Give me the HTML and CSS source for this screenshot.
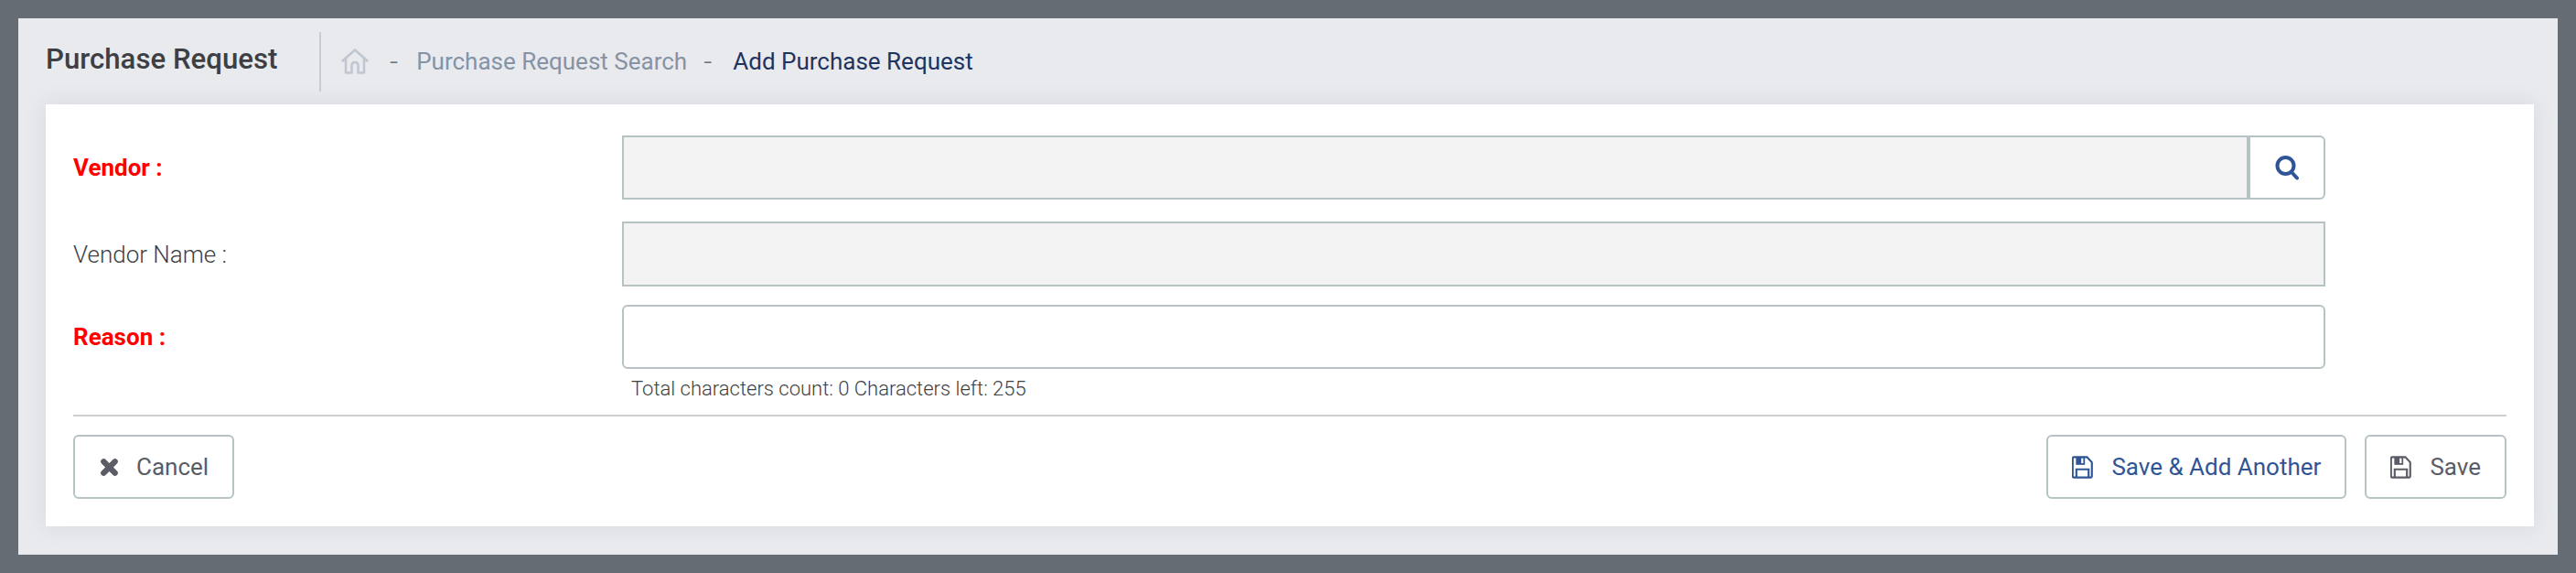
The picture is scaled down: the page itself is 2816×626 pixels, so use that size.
FILE: index.html
```html
<!DOCTYPE html>
<html>
<head>
    <title>Purchase Request</title>
    <link rel="stylesheet" href="styles.css">
</head>
<body>
    <div class="page">
        <div class="page-header">
            <h1>Purchase Request</h1>
            <div class="breadcrumb">
                <svg class="home-icon" viewBox="0 0 30 28" width="30" height="28" fill="none" stroke="#c0c7d1" stroke-width="2.600" stroke-linejoin="round" stroke-linecap="round">
                    <path d="M1.500 13.500 15 1.500l13.500 12"/>
                    <path d="M5 11v15.500h6.500v-8a3.500 3.500 0 0 1 7 0v8H25V11"/>
                </svg>
                <span class="dash">-</span>
                <a class="crumb">Purchase Request Search</a>
                <span class="dash">-</span>
                <span class="crumb-current">Add Purchase Request</span>
            </div>
        </div>
        <div class="card">
            <div class="form-row row-vendor">
                <label class="required">Vendor :</label>
                <div class="input-group">
                    <input type="text" class="field field-disabled" disabled>
                    <button class="search-btn" type="button">
                        <svg viewBox="0 0 26 28" width="26" height="28" fill="none" stroke="#2f5597" stroke-linecap="round">
                            <circle cx="11.500" cy="12" r="9" stroke-width="4"/>
                            <path d="M18 19l6 6.500" stroke-width="4"/>
                        </svg>
                    </button>
                </div>
            </div>
            <div class="form-row row-name">
                <label>Vendor Name :</label>
                <input type="text" class="field field-disabled field-square" disabled>
            </div>
            <div class="form-row row-reason">
                <label class="required">Reason :</label>
                <input type="text" class="field field-open">
            </div>
            <p class="char-count">Total characters count: 0 Characters left: 255</p>
            <hr>
            <div class="actions">
                <button class="btn" type="button">
                    <svg class="cancel-icon" viewBox="0 0 22 22" width="21" height="21" fill="none" stroke="#5a5c66" stroke-width="6.500" stroke-linecap="round">
                        <path d="M4.500 4.500l13 13M17.500 4.500l-13 13"/>
                    </svg>
                    Cancel
                </button>
                <div class="actions-right">
                    <button class="btn btn-blue" type="button">
                        <svg viewBox="0 0 26 28" width="25" height="25"><use href="#floppy"/></svg>
                        Save &amp; Add Another
                    </button>
                    <button class="btn" type="button">
                        <svg viewBox="0 0 26 28" width="25" height="25"><use href="#floppy"/></svg>
                        Save
                    </button>
                </div>
            </div>
        </div>
    </div>

    <svg class="defs" width="0" height="0">
        <symbol id="floppy" viewBox="0 0 26 28" preserveAspectRatio="none">
            <path d="M2.500 1.500h16l6 6.500v17a1.500 1.500 0 0 1-1.500 1.500H2.500A1.500 1.500 0 0 1 1 25V3a1.500 1.500 0 0 1 1.500-1.500z" fill="none" stroke="currentColor" stroke-width="2.400"/>
            <path d="M5 1.500h11v9.500H5z" fill="currentColor"/>
            <path d="M11.500 3h2.500v6h-2.500z" fill="#fff"/>
            <path d="M5.500 26V16.500h15V26" fill="none" stroke="currentColor" stroke-width="2.400"/>
        </symbol>
    </svg>
</body>
</html>
```

FILE: styles.css
```css
* {
    box-sizing: border-box;
}
body {
    margin: 0;
    padding: 20px;
    height: 626px;
    background-color: #656c74;
    font-family: Roboto, "Liberation Sans", sans-serif;
}
.page {
    height: 586px;
    padding: 0 26px 31px 30px;
    background-color: #e8eaee;
}
.page-header {
    display: flex;
    align-items: center;
    height: 94px;
}
h1 {
    margin: 0;
    width: 301px;
    height: 65px;
    line-height: 59px;
    border-right: 2px solid #c9ccd0;
    font-size: 31.2px;
    font-weight: 500;
    color: #3d3f45;
}
.breadcrumb {
    display: flex;
    align-items: center;
    margin-left: 22px;
    padding-bottom: 1px;
    font-size: 26px;
}
.dash {
    margin: 0 20px 0 23px;
    font-size: 32px;
    font-weight: 300;
    color: #6f757d;
}
.crumb {
    margin: 0 -5px 0 0;
    color: #8593a5;
}
.crumb-current {
    margin-left: 3px;
    color: #1d3461;
}
.card {
    height: 461px;
    padding: 34px 30px 0;
    background-color: #fff;
    box-shadow: 0 0 22px rgba(120, 125, 140, 0.16);
}
.form-row {
    display: flex;
    align-items: center;
}
.form-row label {
    flex: 0 0 600px;
    font-size: 26px;
    font-weight: 300;
    color: #3d3f45;
}
.form-row label.required {
    font-weight: 700;
    color: #ff0000;
}
.row-vendor {
    height: 70px;
}
.row-name {
    height: 71px;
    margin-top: 24px;
}
.row-reason {
    height: 70px;
    margin-top: 20px;
}
.input-group {
    display: flex;
    width: 1862px;
    height: 70px;
}
.field {
    display: block;
    width: 1862px;
    height: 100%;
    border: 2px solid #b6c2c4;
    border-radius: 6px;
    outline: none;
}
.field-disabled {
    background-color: #f3f3f3;
}
.field-open {
    background-color: #fff;
}
.field-square {
    border-radius: 0;
}
.input-group .field {
    flex: 1;
    width: auto;
    border-radius: 0;
}
.search-btn {
    display: flex;
    align-items: center;
    justify-content: center;
    width: 84px;
    border: 2px solid #b6c2c4;
    border-radius: 0 6px 6px 0;
    background: #fff;
}
.char-count {
    margin: 8px 0 0 610px;
    height: 28px;
    line-height: 28px;
    font-size: 22px;
    font-weight: 300;
    color: #3d3f45;
}
hr {
    margin: 14px 0 20px;
    height: 2px;
    border: 0;
    background-color: #ccd0d0;
}
.actions {
    display: flex;
    justify-content: space-between;
}
.actions-right {
    display: flex;
    gap: 20px;
}
.btn {
    display: flex;
    align-items: center;
    gap: 19px;
    height: 70px;
    padding: 0 26px 0 25px;
    border: 2px solid #b6c2c4;
    border-radius: 6px;
    background: #fff;
    font-family: inherit;
    font-size: 26px;
    color: #5a5c66;
}
.cancel-icon {
    margin-left: 2px;
}
.btn-blue {
    color: #2f5597;
}
.defs {
    position: absolute;
}
```
